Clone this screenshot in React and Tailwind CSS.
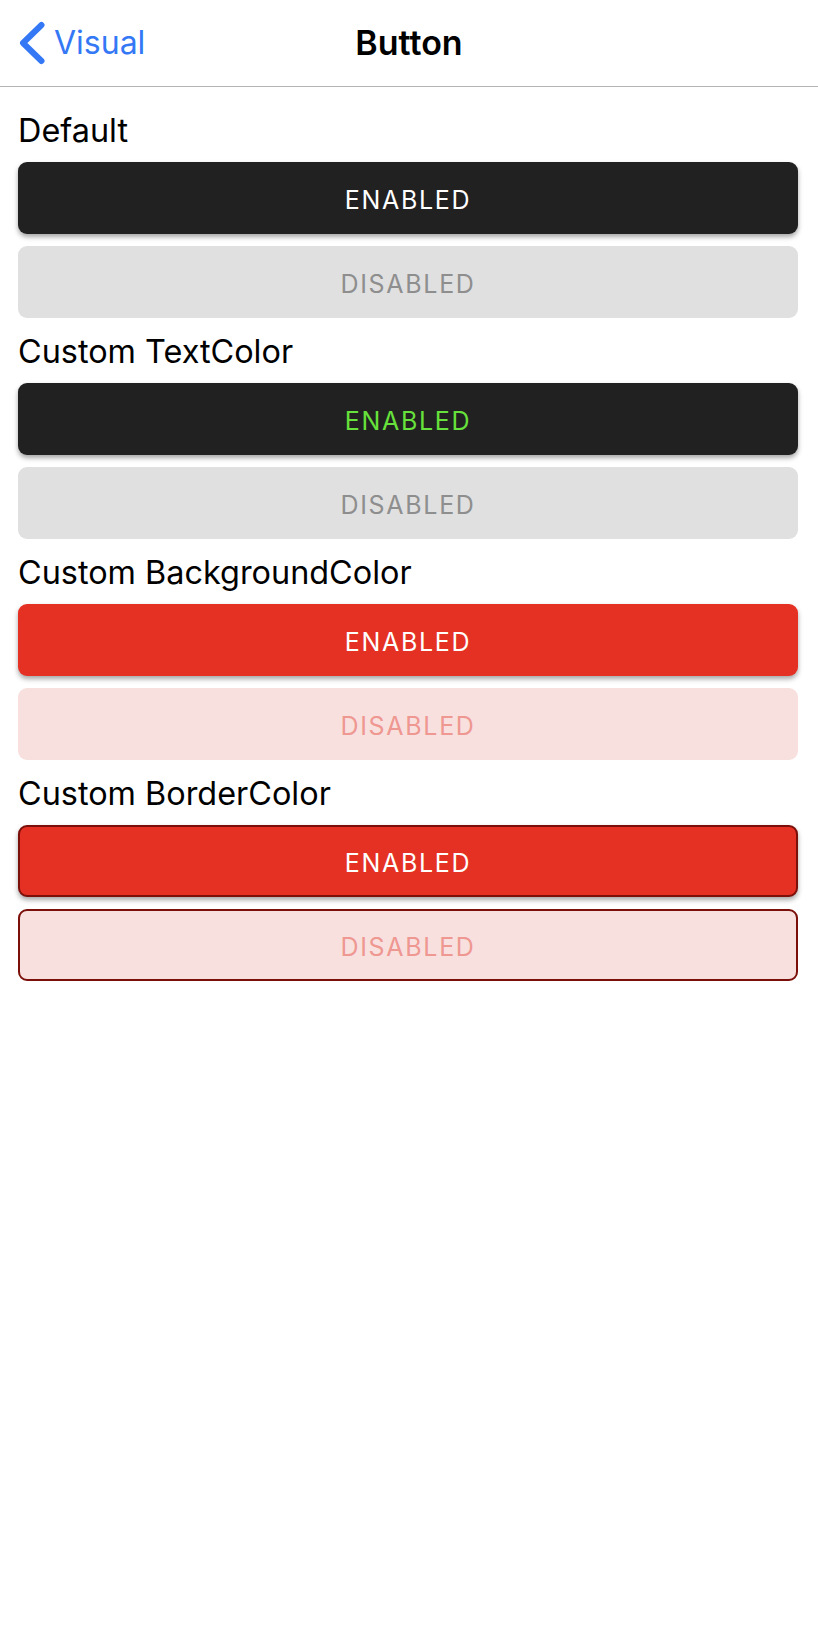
import React from "react";

function Btn({ label, variant }) {
  const base =
    "h-[72px] w-full rounded-[9px] flex items-center justify-center pt-[5px] text-[25px] tracking-[1.7px]";
  const styles = {
    darkEnabled: "bg-[#212121] text-white shadow-[0_3px_5px_rgba(0,0,0,0.35)]",
    greenEnabled: "bg-[#212121] text-[#67e13b] shadow-[0_3px_5px_rgba(0,0,0,0.35)]",
    grayDisabled: "bg-[#e0e0e0] text-[#8e8e8e]",
    redEnabled: "bg-[#e53124] text-white shadow-[0_3px_5px_rgba(0,0,0,0.35)]",
    redDisabled: "bg-[#f8e0df] text-[#ef9791]",
    redBorderEnabled:
      "bg-[#e53124] text-white border-2 border-[#7b0f09] shadow-[0_3px_5px_rgba(0,0,0,0.35)]",
    redBorderDisabled: "bg-[#f8e0df] text-[#ef9791] border-2 border-[#7b0f09]",
  };
  return <div className={`${base} ${styles[variant]}`}>{label}</div>;
}

function Label({ children }) {
  return (
    <div className="h-[41px] leading-[41px] text-[32.4px] text-black pt-[1px]">{children}</div>
  );
}

export default function App() {
  return (
    <div
      className="w-[818px] min-h-[1646px] bg-white"
      style={{ fontFamily: "Inter, 'Noto Sans', sans-serif" }}
    >
      <div className="relative h-[87px] border-b border-[#b4b4b4] flex items-center">
        <div className="absolute left-[19px] top-[21px] flex items-center gap-[9px] text-[#3478f6]">
          <svg width="26" height="44" viewBox="0 0 26 44">
            <path
              d="M22.5 4 L4 22 L22.5 40"
              fill="none"
              stroke="#3478f6"
              strokeWidth="6"
              strokeLinecap="round"
              strokeLinejoin="round"
            />
          </svg>
          <span className="text-[32px] leading-none">Visual</span>
        </div>
        <div className="w-full text-center text-[34px] font-semibold text-black leading-none">
          Button
        </div>
      </div>
      <div className="flex flex-col gap-[12px] pl-[18px] pr-[20px] pt-[22px]">
        <Label>Default</Label>
        <Btn label="ENABLED" variant="darkEnabled" />
        <Btn label="DISABLED" variant="grayDisabled" />
        <Label>Custom TextColor</Label>
        <Btn label="ENABLED" variant="greenEnabled" />
        <Btn label="DISABLED" variant="grayDisabled" />
        <Label>Custom BackgroundColor</Label>
        <Btn label="ENABLED" variant="redEnabled" />
        <Btn label="DISABLED" variant="redDisabled" />
        <Label>Custom BorderColor</Label>
        <Btn label="ENABLED" variant="redBorderEnabled" />
        <Btn label="DISABLED" variant="redBorderDisabled" />
      </div>
    </div>
  );
}
